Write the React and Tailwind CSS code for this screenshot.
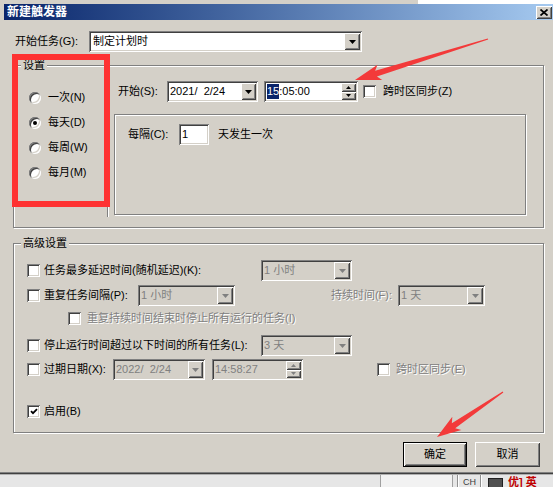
import React from 'react';

const sunken = 'shadow-[inset_1px_1px_0_#808080,inset_-1px_-1px_0_#ffffff,inset_2px_2px_0_#404040,inset_-2px_-2px_0_#d4d0c8]';
const raised = 'shadow-[inset_1px_1px_0_#ffffff,inset_-1px_-1px_0_#404040,inset_2px_2px_0_#d4d0c8,inset_-2px_-2px_0_#808080]';
const etched = 'border border-[#808080] shadow-[1px_1px_0_#ffffff,inset_1px_1px_0_#ffffff]';
const grayText = 'text-[#808080] [text-shadow:1px_1px_0_#ffffff]';

const Tri = ({ disabled, up }) => (
    <svg width="7" height="4" viewBox="0 0 7 4">
        <path d={up ? 'M0 4h7L3.5 0z' : 'M0 0h7L3.5 4z'} fill={disabled ? '#808080' : '#000'} />
    </svg>
);

const DropBtn = ({ disabled, cls = 'w-[16px]' }) => (
    <div className={`${cls} h-full bg-[#d4d0c8] ${raised} flex items-center justify-center`}>
        <Tri disabled={disabled} />
    </div>
);

const Spin = ({ disabled }) => (
    <div className="w-[15px] h-full flex flex-col">
        <div className={`flex-1 bg-[#d4d0c8] ${raised} flex items-center justify-center`}>
            <svg width="5" height="3" viewBox="0 0 5 3"><path d="M0 3h5L2.5 0z" fill={disabled ? '#808080' : '#000'} /></svg>
        </div>
        <div className={`flex-1 bg-[#d4d0c8] ${raised} flex items-center justify-center`}>
            <svg width="5" height="3" viewBox="0 0 5 3"><path d="M0 0h5L2.5 3z" fill={disabled ? '#808080' : '#000'} /></svg>
        </div>
    </div>
);

// sunken edit box with an optional button on the right
const Field = ({ cls, value, disabled, btn, btnCls, pad = 'pl-[1px]' }) => (
    <div className={`${cls} h-[21px] shrink-0 flex p-[2px] ${sunken} ${disabled ? 'bg-[#d4d0c8]' : 'bg-white'}`}>
        <div className={`flex-1 flex items-center whitespace-pre ${pad} ${disabled ? 'text-[#808080]' : ''}`}>{value}</div>
        {btn === 'drop' && <DropBtn disabled={disabled} cls={btnCls} />}
        {btn === 'spin' && <Spin disabled={disabled} />}
    </div>
);

const Check = ({ checked, cls = '' }) => (
    <div className={`${cls} w-[13px] h-[13px] shrink-0 bg-white ${sunken} flex items-center justify-center`}>
        {checked && (
            <svg width="8" height="7" viewBox="0 0 8 7">
                <path d="M1 3.2 L3 5.2 L7 1.2" stroke="#000" strokeWidth="1.8" fill="none" />
            </svg>
        )}
    </div>
);

const Radio = ({ checked }) => (
    <div className={`w-[12px] h-[12px] rounded-full bg-white ${sunken} flex items-center justify-center`}>
        {checked && <div className="w-[4px] h-[4px] rounded-full bg-black" />}
    </div>
);

function arrowPoints(x1, y1, x2, y2, head, hw, bw) {
    const len = Math.hypot(x2 - x1, y2 - y1);
    const ux = (x2 - x1) / len, uy = (y2 - y1) / len;
    const nx = -uy, ny = ux;
    const bx = x2 - ux * head, by = y2 - uy * head;
    const cx = bx - ux * 4, cy = by - uy * 4;
    const pts = [
        [x1 + nx * 0.6, y1 + ny * 0.6],
        [bx + nx * bw, by + ny * bw],
        [cx + nx * hw, cy + ny * hw],
        [x2, y2],
        [cx - nx * hw, cy - ny * hw],
        [bx - nx * bw, by - ny * bw],
        [x1 - nx * 0.6, y1 - ny * 0.6]
    ];
    return pts.map(p => p.join(',')).join(' ');
}

const radios = [
    { label: '一次(N)', checked: false },
    { label: '每天(D)', checked: true },
    { label: '每周(W)', checked: false },
    { label: '每月(M)', checked: false }
];

export default function App() {
    return (
        <div className="relative w-[553px] h-[487px] overflow-hidden bg-[#d4d0c8] text-[11px] leading-none text-black whitespace-nowrap font-['Liberation_Sans','Noto_Sans_CJK_SC',sans-serif]">
            {/* strip above the window */}
            <div className="flex h-[4px]">
                <div className="w-[418px] bg-[#d4d0c8]" />
                <div className="flex-1 bg-white" />
            </div>

            <div className="pl-[4px]">
                {/* Title bar */}
                <div className="h-[16px] flex items-center justify-between pl-[3px] pr-[1px] bg-linear-to-r from-[#0a246a] to-[#a6caf0]">
                    <span className="font-bold text-[12px] text-white">新建触发器</span>
                    <div className={`w-[16px] h-[13px] bg-[#d4d0c8] ${raised} flex items-center justify-center`}>
                        <svg width="8" height="7" viewBox="0 0 8 7">
                            <path d="M0.5 0.5 L7.5 6.5 M7.5 0.5 L0.5 6.5" stroke="#000" strokeWidth="1.7" />
                        </svg>
                    </div>
                </div>

                <div className="pl-[9px]">
                    {/* Begin task */}
                    <div className="mt-[11px] flex items-center h-[21px]">
                        <span className="ml-[2px] w-[74px]">开始任务(G):</span>
                        <Field cls="w-[273px]" value="制定计划时" btn="drop" pad="pl-[2px]" />
                    </div>

                    {/* Settings */}
                    <div className={`relative mt-[13px] w-[531px] h-[163px] ${etched} flex`}>
                        <span className="absolute left-[7px] top-[-6px] px-[2px] bg-[#d4d0c8]">设置</span>

                        <div className="w-[93px] flex flex-col pt-[19px] pl-[15px]">
                            {radios.map((r) => (
                                <div key={r.label} className="h-[25px] flex items-center gap-[7px]">
                                    <Radio checked={r.checked} />
                                    <span>{r.label}</span>
                                </div>
                            ))}
                        </div>

                        <div className="w-[2px] h-[151px] border-l border-l-[#808080] border-r border-r-white" />

                        <div className="flex-1 pl-[5px] pt-[15px]">
                            <div className="ml-[4px] flex items-center h-[21px]">
                                <span className="w-[49px]">开始(S):</span>
                                <Field cls="w-[91px]" value="2021/  2/24" btn="drop" btnCls="w-[15px]" />
                                <div className={`ml-[6px] w-[94px] h-[21px] flex p-[2px] bg-white ${sunken}`}>
                                    <div className="flex-1 flex items-center pl-[1px]">
                                        <span className="bg-[#0a246a] text-white py-[2px]">15</span>
                                        <span>:05:00</span>
                                    </div>
                                    <Spin />
                                </div>
                                <Check cls="ml-[5px]" />
                                <span className="ml-[7px]">跨时区同步(Z)</span>
                            </div>

                            <div className={`mt-[12px] w-[412px] h-[101px] ${etched} pl-[13px] pt-[9px]`}>
                                <div className="flex items-center h-[21px]">
                                    <span className="w-[51px]">每隔(C):</span>
                                    <Field cls="w-[30px]" value="1" pad="pl-[1px]" />
                                    <span className="ml-[9px]">天发生一次</span>
                                </div>
                            </div>
                        </div>
                    </div>

                    {/* Advanced settings */}
                    <div className={`relative mt-[15px] w-[531px] h-[190px] ${etched} pl-[13px] pt-[16px]`}>
                        <span className="absolute left-[7px] top-[-6px] px-[2px] bg-[#d4d0c8]">高级设置</span>

                        <div className="flex items-center h-[21px]">
                            <Check />
                            <span className="ml-[4px] w-[217px] shrink-0">任务最多延迟时间(随机延迟)(K):</span>
                            <Field cls="w-[91px]" value="1 小时" btn="drop" disabled />
                        </div>

                        <div className="mt-[4px] flex items-center h-[21px]">
                            <Check />
                            <span className="ml-[4px] w-[94px] shrink-0">重复任务间隔(P):</span>
                            <Field cls="w-[97px]" value="1 小时" btn="drop" disabled />
                            <span className={`w-[163px] shrink-0 text-right pr-[6px] ${grayText}`}>持续时间(F):</span>
                            <Field cls="w-[87px]" value="1 天" btn="drop" disabled />
                        </div>

                        <div className="mt-[2px] flex items-center h-[20px]">
                            <Check cls="ml-[41px]" />
                            <span className={`ml-[6px] ${grayText}`}>重复持续时间结束时停止所有运行的任务(I)</span>
                        </div>

                        <div className="mt-[7px] flex items-center h-[21px]">
                            <Check />
                            <span className="ml-[4px] w-[217px] shrink-0">停止运行时间超过以下时间的所有任务(L):</span>
                            <Field cls="w-[91px]" value="3 天" btn="drop" disabled />
                        </div>

                        <div className="mt-[3px] flex items-center h-[21px]">
                            <Check />
                            <span className="ml-[4px] w-[69px] shrink-0">过期日期(X):</span>
                            <Field cls="w-[92px]" value="2022/  2/24" btn="drop" btnCls="w-[15px]" disabled />
                            <Field cls="ml-[7px] w-[91px]" value="14:58:27" btn="spin" disabled />
                            <Check cls="ml-[74px]" />
                            <span className={`ml-[6px] ${grayText}`}>跨时区同步(E)</span>
                        </div>

                        <div className="mt-[22px] flex items-center h-[18px]">
                            <Check checked />
                            <span className="ml-[4px]">启用(B)</span>
                        </div>
                    </div>

                    {/* Buttons */}
                    <div className="mt-[9px] ml-[390px] flex gap-[8px]">
                        <div className="w-[64px] h-[25px] border border-black">
                            <div className={`w-full h-full bg-[#d4d0c8] ${raised} flex items-center justify-center`}>确定</div>
                        </div>
                        <div className={`w-[65px] h-[25px] bg-[#d4d0c8] ${raised} flex items-center justify-center`}>取消</div>
                    </div>
                </div>
            </div>

            {/* window bottom edge */}
            <div className="mt-[5px] h-[1px] bg-[#808080]" />
            <div className="h-[1px] bg-[#404040]" />

            {/* taskbar strip */}
            <div className="flex h-[13px] bg-[#e6e6e6] border-t border-[#b0b0b0]">
                <div className="ml-[380px] w-[73px] h-full bg-[#f2f2f2] border-l border-r border-[#a0a0a0]" />
                <div className="ml-[4px] w-[2px] h-full border-l border-l-[#909090] border-r border-r-white" />
                <span className="ml-[4px] mt-[3px] text-[9px] text-[#404040]">CH</span>
                <div className="ml-[4px] w-[2px] h-full border-l border-l-[#909090] border-r border-r-white" />
                <div className="ml-[6px] mt-[3px] w-[15px] h-[10px] bg-[#505050] border border-[#202020]" />
                <span className="ml-[5px] mt-[2px] text-[11px] text-[#c00000] font-bold">优] 英</span>
            </div>

            {/* red annotations */}
            <div className="absolute left-[12px] top-[54px] w-[98px] h-[153px] border-[6px] border-[#fe3232]" />
            <svg className="absolute inset-0 pointer-events-none" width="553" height="487">
                <polygon points={arrowPoints(488, 39, 355, 80, 22, 8, 3)} fill="#f33a3a" />
                <polygon points={arrowPoints(503, 392, 437, 437, 20, 8, 3)} fill="#f33a3a" />
            </svg>
        </div>
    );
}
